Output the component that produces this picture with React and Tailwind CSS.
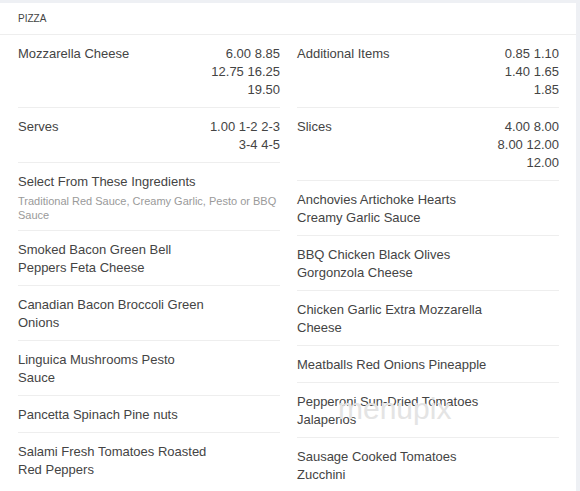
const left = [
  { name: "Mozzarella Cheese", price: "6.00 8.85 12.75 16.25 19.50" },
  { name: "Serves", price: "1.00 1-2 2-3 3-4 4-5" },
  {
    name: "Select From These Ingredients",
    desc: "Traditional Red Sauce, Creamy Garlic, Pesto or BBQ Sauce",
  },
  { name: "Smoked Bacon Green Bell Peppers Feta Cheese" },
  { name: "Canadian Bacon Broccoli Green Onions" },
  { name: "Linguica Mushrooms Pesto Sauce" },
  { name: "Pancetta Spinach Pine nuts" },
  { name: "Salami Fresh Tomatoes Roasted Red Peppers" },
];

const right = [
  { name: "Additional Items", price: "0.85 1.10 1.40 1.65 1.85" },
  { name: "Slices", price: "4.00 8.00 8.00 12.00 12.00" },
  { name: "Anchovies Artichoke Hearts Creamy Garlic Sauce" },
  { name: "BBQ Chicken Black Olives Gorgonzola Cheese" },
  { name: "Chicken Garlic Extra Mozzarella Cheese" },
  { name: "Meatballs Red Onions Pineapple" },
  { name: "Pepperoni Sun-Dried Tomatoes Jalapenos" },
  { name: "Sausage Cooked Tomatoes Zucchini" },
];

function Item({ item, last }) {
  return (
    <div className={"pt-[10px] pb-[8px] " + (last ? "" : "border-b border-[#eeeeee]")}>
      <div className="flex">
        <div className="flex-1 min-w-0 max-w-[192px]">{item.name}</div>
        {item.price && (
          <div className="w-[72px] shrink-0 ml-auto text-right">{item.price}</div>
        )}
      </div>
      {item.desc && (
        <div className="mt-[3px] text-[11px] leading-[14px] text-[#9a9a9a]">{item.desc}</div>
      )}
    </div>
  );
}

function Column({ items }) {
  return (
    <div className="w-[262px]">
      {items.map((item, i) => (
        <Item key={item.name} item={item} last={i === items.length - 1} />
      ))}
    </div>
  );
}

export default function App() {
  return (
    <div
      className="h-[491px] w-[580px] bg-[#eef0f4] overflow-hidden pt-[3px] pr-[4px]"
      style={{ fontFamily: '"Liberation Sans", Arial, sans-serif' }}
    >
      <div className="relative bg-white h-full">
        <div className="h-[32px] border-b border-[#eeeeee] pl-[18px] flex items-center text-[10px] text-[#444] uppercase">
          Pizza
        </div>
        <div className="flex gap-[17px] pl-[18px] text-[13px] leading-[18px] text-[#444]">
          <Column items={left} />
          <Column items={right} />
        </div>
        <div className="absolute left-[338px] top-[383px] text-[30px] text-[#e4e4e4] pointer-events-none">
          menupix
        </div>
      </div>
    </div>
  );
}
